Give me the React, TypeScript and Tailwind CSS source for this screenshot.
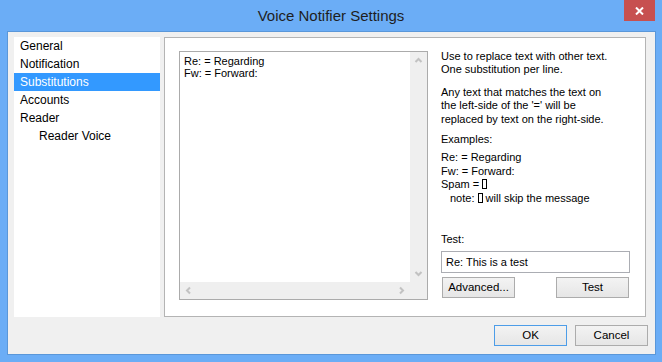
import React from "react";

const items = [
  { label: "General", indent: false },
  { label: "Notification", indent: false },
  { label: "Substitutions", indent: false, selected: true },
  { label: "Accounts", indent: false },
  { label: "Reader", indent: false },
  { label: "Reader Voice", indent: true },
];

function Chevron({ dir }: { dir: "up" | "down" | "left" | "right" }) {
  const pts = {
    up: "1.5,6 4.5,3 7.5,6",
    down: "1.5,3 4.5,6 7.5,3",
    left: "6,1.5 3,4.5 6,7.5",
    right: "3,1.5 6,4.5 3,7.5",
  }[dir];
  return (
    <svg width="9" height="9" viewBox="0 0 9 9">
      <polyline points={pts} fill="none" stroke="#c2c2c2" strokeWidth="2" />
    </svg>
  );
}

function Btn({ children, primary }: { children: React.ReactNode; primary?: boolean }) {
  return (
    <button
      className={
        primary
          ? "w-[73px] h-[21px] border border-[#4d9de8] bg-linear-to-b from-[#f3f3f3] to-[#e6e6e6] text-[11.5px] text-black"
          : "w-[73px] h-[21px] border border-[#acacac] bg-linear-to-b from-[#f3f3f3] to-[#e6e6e6] text-[11.5px] text-black"
      }
    >
      {children}
    </button>
  );
}

export default function App() {
  return (
    <div className="w-[662px] h-[362px] bg-[#6badf6] flex flex-col font-['Liberation_Sans',Arial,sans-serif] text-black">
      {/* title bar */}
      <div className="h-[31px] shrink-0 grid grid-cols-[1fr_auto_1fr]">
        <div />
        <div className="text-[15px] text-[#1e1e1e] leading-[31px]">Voice Notifier Settings</div>
        <div className="flex justify-end pr-[7px]">
          <div className="w-[31px] h-[21px] bg-[#c75050] flex items-center justify-center">
            <svg width="9" height="8" viewBox="0 0 9 8">
              <path d="M1 0.5 L8 7.5 M8 0.5 L1 7.5" stroke="white" strokeWidth="2" />
            </svg>
          </div>
        </div>
      </div>

      {/* client */}
      <div className="ml-[7px] mr-[6px] h-[324px] border border-[#5a97d9] bg-[#f0f0f0] flex flex-col">
        <div className="flex gap-[4px] pl-[6px] pt-[5px]">
          {/* tree list */}
          <div className="w-[146px] h-[280px] bg-white text-[12px]">
            {items.map((it) => (
              <div
                key={it.label}
                className={
                  (it.selected ? "bg-[#3399ff] text-white " : "") +
                  (it.indent ? "pl-[25px] " : "pl-[6px] ") +
                  "h-[18px] leading-[18px]"
                }
              >
                {it.label}
              </div>
            ))}
          </div>

          {/* frame */}
          <div className="w-[482px] h-[280px] border border-[#b4b4b4] bg-white flex pl-[14px] pt-[13px] text-[11px]">
            <div className="w-[249px] h-[249px] border border-[#ababab] flex flex-col">
              <div className="flex flex-1">
                <div className="flex-1 pl-[4px] pt-[3px] leading-[12px]">
                  <div>Re: = Regarding</div>
                  <div>Fw: = Forward:</div>
                </div>
                <div className="w-[17px] bg-[#efefef] flex flex-col justify-between">
                  <div className="h-[17px] flex items-center justify-center">
                    <Chevron dir="up" />
                  </div>
                  <div className="h-[17px] flex items-center justify-center">
                    <Chevron dir="down" />
                  </div>
                </div>
              </div>
              <div className="h-[17px] flex bg-[#efefef]">
                <div className="flex-1 flex justify-between">
                  <div className="w-[17px] flex items-center justify-center">
                    <Chevron dir="left" />
                  </div>
                  <div className="w-[17px] flex items-center justify-center">
                    <Chevron dir="right" />
                  </div>
                </div>
                <div className="w-[17px]" />
              </div>
            </div>

            <div className="ml-[13px] w-[189px] h-[249px] flex flex-col leading-[13.4px]">
              <div className="-mt-[1px]">
                Use to replace text with other text.
                <br />
                One substitution per line.
              </div>
              <div className="mt-[9px]">
                Any text that matches the text on
                <br />
                the left-side of the '=' will be
                <br />
                replaced by text on the right-side.
              </div>
              <div className="mt-[7px]">Examples:</div>
              <div className="mt-[5px]">
                <div>Re: = Regarding</div>
                <div>Fw: = Forward:</div>
                <div>
                  Spam = <span className="inline-block w-[5px] h-[10px] border border-black align-[-1px]" />
                </div>
                <div className="pl-[9px]">
                  note: <span className="inline-block w-[5px] h-[10px] border border-black align-[-1px]" /> will skip
                  the message
                </div>
              </div>

              <div className="mt-auto">
                <div className="leading-[13px]">Test:</div>
                <div className="mt-[5px] h-[22px] border border-[#abadb3] bg-white pl-[4px] leading-[20px]">
                  Re: This is a test
                </div>
                <div className="mt-[4px] mb-[2px] flex justify-between pl-[1px] pr-[1px]">
                  <Btn>Advanced...</Btn>
                  <Btn>Test</Btn>
                </div>
              </div>
            </div>
          </div>
        </div>

        <div className="flex justify-end gap-[8px] pr-[7px] pt-[8px]">
          <Btn primary>OK</Btn>
          <Btn>Cancel</Btn>
        </div>
      </div>
    </div>
  );
}
